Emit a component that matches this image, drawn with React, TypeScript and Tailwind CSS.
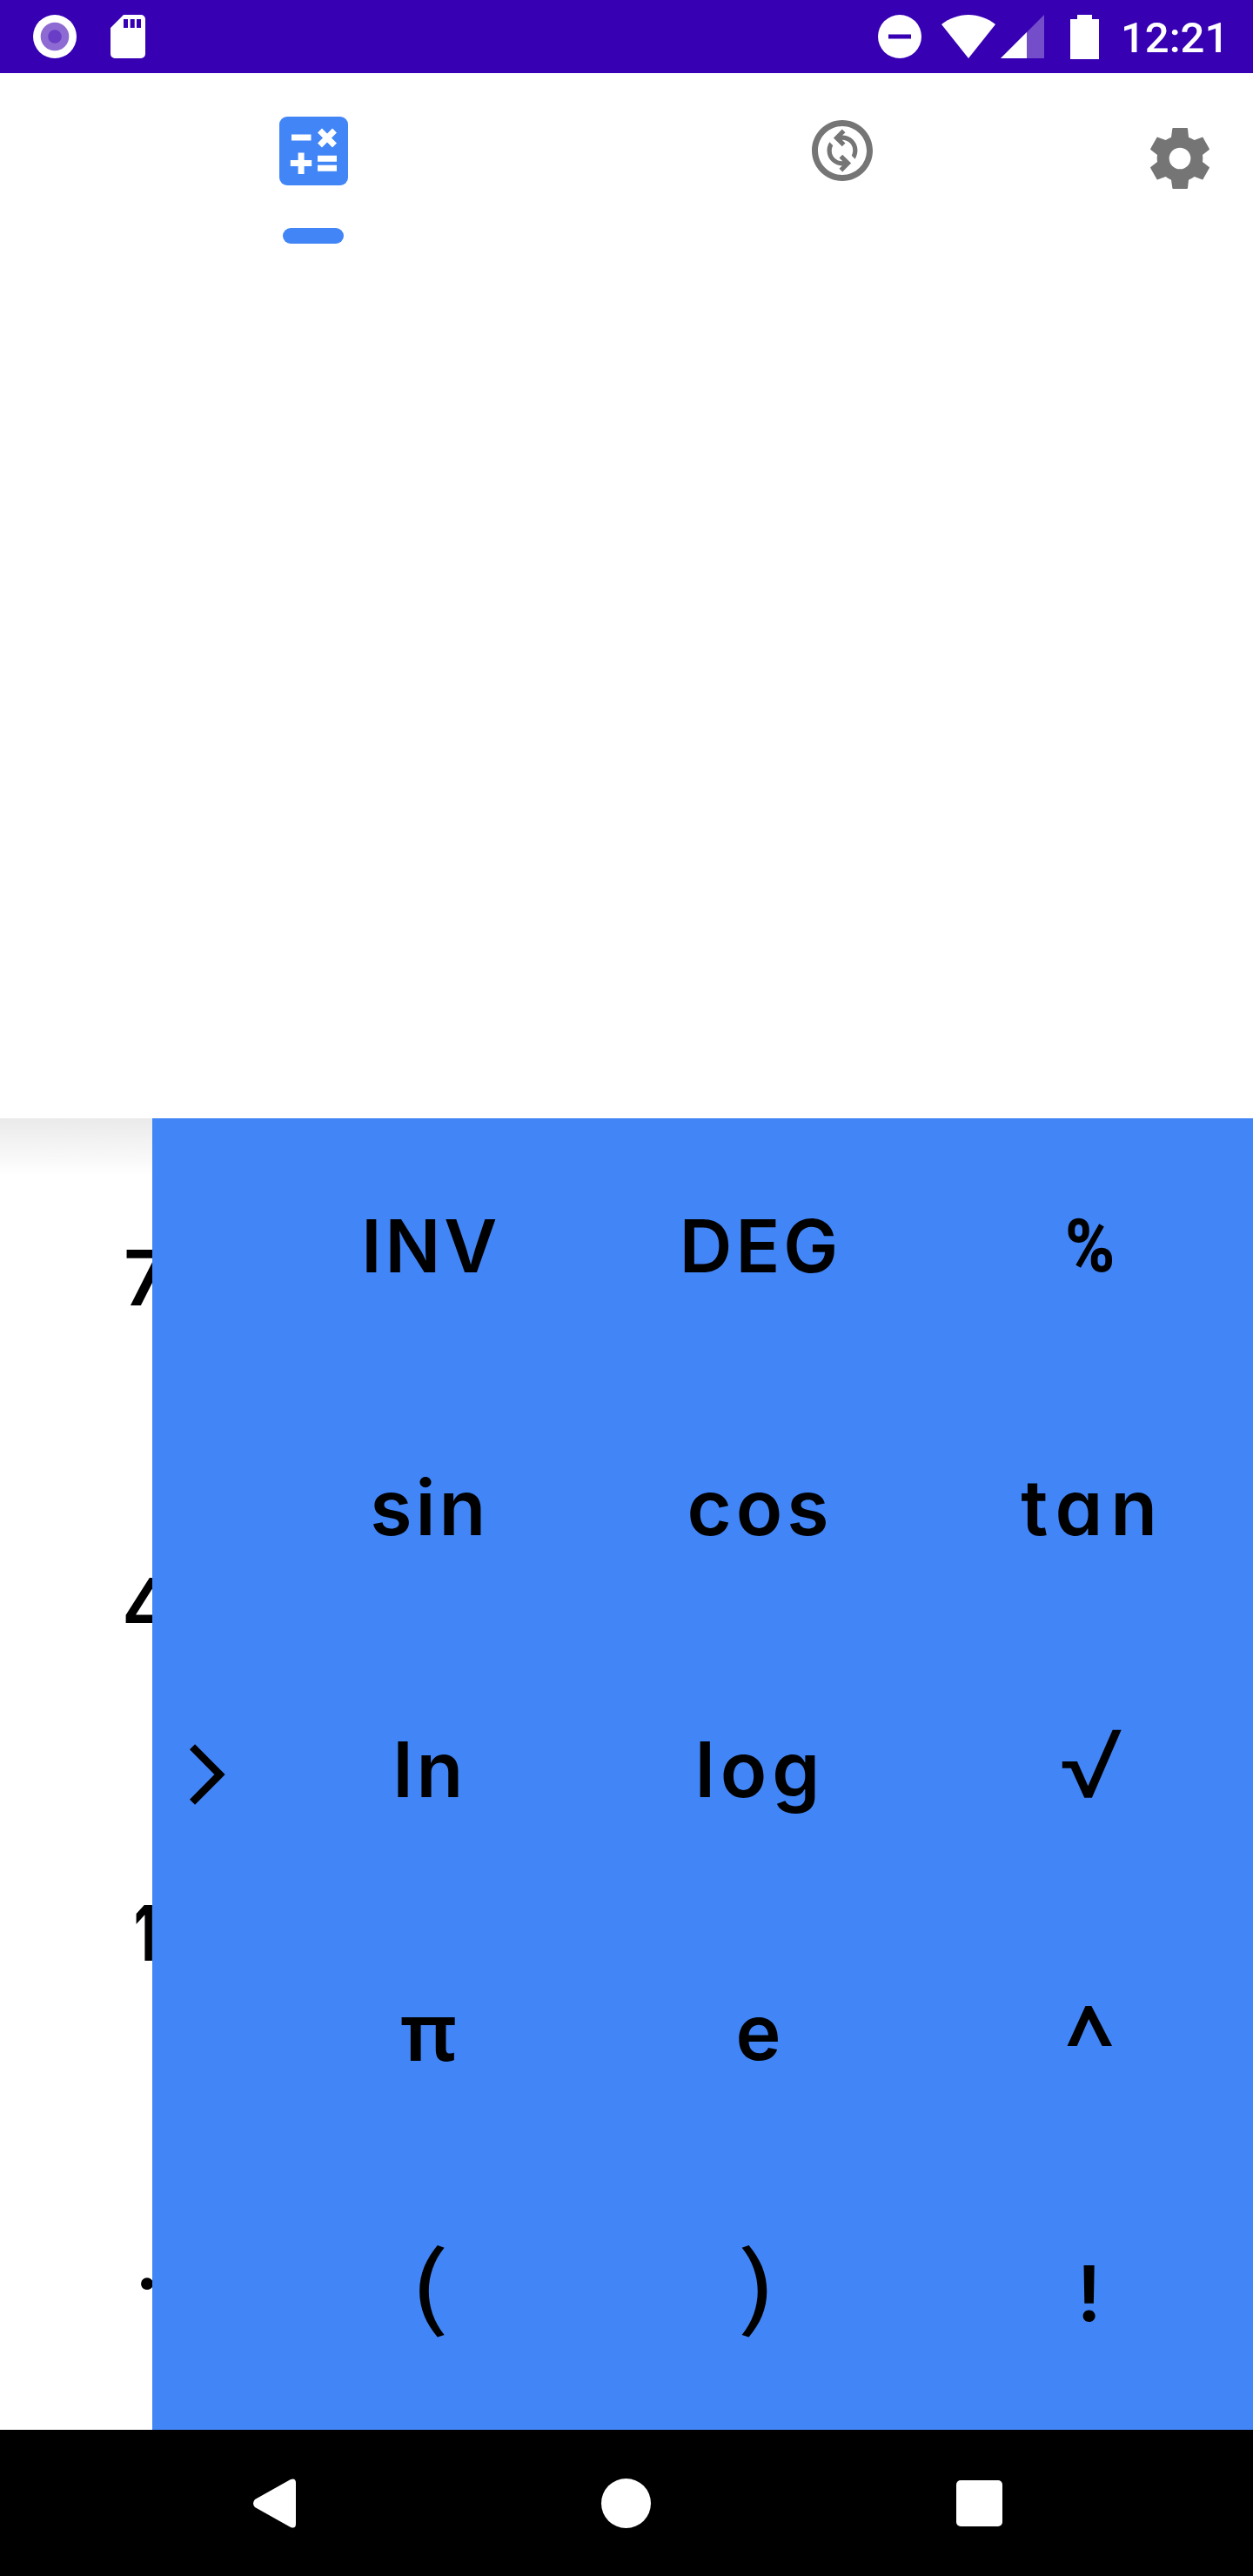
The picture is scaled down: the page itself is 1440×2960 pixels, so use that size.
import { MdOutlineChangeCircle } from "react-icons/md";

type Key = { label: string; className: string };

const KEYS: Key[] = [
  { label: "INV", className: "pb-[8px] pl-[9px] text-[84px] tracking-[4px]" },
  { label: "DEG", className: "pb-[8px] pl-[7px] text-[84px] tracking-[4px]" },
  { label: "%", className: "pb-[8px] pl-[6px] font-['Roboto'] text-[86px] font-extrabold scale-x-[.9]" },
  { label: "sin", className: "pb-[10px] pl-[6px] text-[88px] tracking-[4px]" },
  { label: "cos", className: "pb-[10px] pl-[6px] text-[88px] tracking-[5px]" },
  { label: "tan", className: "pb-[10px] pl-[12px] text-[88px] tracking-[9px]" },
  { label: "ln", className: "pb-[10px] pl-[6px] text-[88px] tracking-[4px]" },
  { label: "log", className: "pb-[10px] pl-[6px] text-[88px] tracking-[6px]" },
  { label: "√", className: "pb-[16px] font-['Open_Sans'] text-[92px] font-semibold scale-x-[1.25]" },
  { label: "π", className: "pb-[14px] pl-[3px] font-['Noto_Sans'] text-[92px]" },
  { label: "e", className: "pb-[10px] pl-[2px] text-[88px]" },
  { label: "^", className: "pb-[4px] pl-[4px] font-['Noto_Sans'] text-[98px] font-bold" },
  { label: "(", className: "pb-[42px] pl-[3px] font-['Noto_Sans_CJK_SC'] text-[104px] font-normal scale-x-[1.35]" },
  { label: ")", className: "pb-[42px] font-['Noto_Sans_CJK_SC'] text-[104px] font-normal scale-x-[1.35]" },
  { label: "!", className: "pb-[12px] pl-[3px] text-[88px]" },
];

const DIGITS: Key[] = [
  { label: "7", className: "ml-[142px]" },
  { label: "4", className: "ml-[140px]" },
  { label: "1", className: "ml-[154px] origin-left scale-x-[.65] font-bold" },
  { label: ".", className: "ml-[155px]" },
];

function StatusBar() {
  return (
    <div className="flex h-[84px] shrink-0 items-center bg-[#3700b3] pl-[38px] pr-[34px] text-white">
      <svg width="50" height="50" viewBox="0 0 50 50">
        <circle cx="25" cy="25" r="25" fill="#fff" />
        <circle cx="25" cy="25" r="16.3" fill="#8d6bd3" />
        <circle cx="25" cy="25" r="7.8" fill="#6a3dc6" />
      </svg>
      <svg className="ml-[39px]" width="40" height="50" viewBox="0 0 40 50">
        <path
          fill="#fff"
          fillRule="evenodd"
          d="M15 0H35a5 5 0 0 1 5 5V45a5 5 0 0 1-5 5H5a5 5 0 0 1-5-5V15ZM15 5v10h5V5ZM22.700 5v10h5V5ZM30 5v10h5V5Z"
        />
      </svg>
      <svg className="ml-auto" width="50" height="50" viewBox="0 0 50 50">
        <circle cx="25" cy="25" r="25" fill="#fff" />
        <rect x="12" y="22.500" width="26" height="5" fill="#3700b3" />
      </svg>
      <svg className="ml-[22px]" width="64" height="50" viewBox="0 0 64 50">
        <path fill="#fff" d="M1 11C10 4 20.500 0 32 0S54 4 63 11L32 50Z" />
      </svg>
      <svg className="ml-[5px]" width="50" height="50" viewBox="0 0 50 50">
        <path fill="#fff" fillOpacity=".3" d="M0 50L50 0V50Z" />
        <path fill="#fff" d="M0 50L30 20V50Z" />
      </svg>
      <svg className="ml-[30px]" width="33" height="52" viewBox="0 0 33 52">
        <path fill="#fff" d="M8 1h17v5h8v46H0V6h8Z" />
      </svg>
      <span className="ml-[25px] mt-[3px] w-[118px] whitespace-nowrap font-['Roboto'] text-[49px] font-medium leading-none">
        12:21
      </span>
    </div>
  );
}

function CalculatorIcon() {
  return (
    <svg width="79" height="79" viewBox="0 0 79 79">
      <rect width="79" height="79" rx="9" fill="#4285f6" />
      <g stroke="#fff" strokeWidth="7">
        <path d="M14 24h22.500M12.800 53.500h24.400M25.100 41.500v24.500M44 48.200h22M44 59.300h22" />
        <path d="M46.500 16L63.500 33M63.500 16L46.500 33" />
      </g>
    </svg>
  );
}

function GearIcon() {
  return (
    <svg width="68" height="70" viewBox="0 0 204 210">
      <path
        fill="#757575"
        fillRule="evenodd"
        d="M76 2Q76 0 79 0H126Q129 0 129 3L132 32Q142 36 152 42L178 32Q181 31 182 34L204 73Q204 75 202 76L180 93Q182 105 180 117L202 134Q204 135 204 137L182 176Q181 179 178 178L152 168Q142 175 132 179L129 207Q129 210 126 210H79Q76 210 76 207L72 179Q62 175 53 168L26 178Q23 179 22 176L0 137Q0 135 2 134L24 117Q22 105 24 93L2 76Q0 75 0 73L22 34Q23 31 26 32L53 42Q62 36 72 32ZM102 68a37 37 0 1 0 0 74a37 37 0 1 0 0-74Z"
      />
    </svg>
  );
}

function TopTabs() {
  return (
    <div className="flex h-[196px] shrink-0 bg-white pl-[56px]">
      <div className="flex w-[608px] flex-col items-center pt-[50px]">
        <CalculatorIcon />
        <div className="mt-[49px] h-[18px] w-[70px] rounded-[9px] bg-[#4285f6]" />
      </div>
      <div className="flex w-[608px] justify-center pt-[47px]">
        <MdOutlineChangeCircle size={84} color="#757575" />
      </div>
      <div className="flex w-[168px] justify-center pt-[63px]">
        <GearIcon />
      </div>
    </div>
  );
}

export default function App() {
  return (
    <div className="flex h-[2960px] w-[1440px] flex-col overflow-hidden bg-white font-['Inter',sans-serif] text-black [font-feature-settings:'cv11']">
      <StatusBar />
      <TopTabs />
      <div className="h-[1005px] shrink-0 bg-white" />
      <div className="flex h-[1507px] shrink-0">
        <div className="grid w-[175px] grid-rows-4 overflow-hidden bg-linear-to-b from-[#eaeaea] to-white bg-[length:100%_66px] bg-no-repeat">
          {DIGITS.map((d) => (
            <div key={d.label} className="flex items-center overflow-hidden pb-[11px] text-[88px] font-[560] leading-none">
              <span className={d.className}>{d.label}</span>
            </div>
          ))}
        </div>
        <div className="flex w-[1265px] bg-[#4285f6]">
          <div className="flex w-[126px] items-center justify-center">
            <svg width="41" height="70" viewBox="0 0 41 70">
              <path d="M3 3.200L34.500 35L3 66.800" fill="none" stroke="#000" strokeWidth="8.700" />
            </svg>
          </div>
          <div className="grid flex-1 grid-cols-3 grid-rows-5">
            {KEYS.map((k) => (
              <div key={k.label} className="flex min-h-0 items-center justify-center font-[560] leading-none">
                <span className={"leading-none " + k.className}>{k.label}</span>
              </div>
            ))}
          </div>
        </div>
      </div>
      <div className="flex h-[168px] shrink-0 items-center bg-black pl-[291px]">
        <svg width="49" height="57" viewBox="0 0 49 57">
          <path fill="#fff" d="M2 24L43 1Q49-1 49 5V52Q49 58 43 56L2 33Q-2 28.500 2 24Z" />
        </svg>
        <div className="ml-[351px] size-[57px] rounded-full bg-white" />
        <div className="ml-[351px] size-[53px] rounded-[5px] bg-white" />
      </div>
    </div>
  );
}
